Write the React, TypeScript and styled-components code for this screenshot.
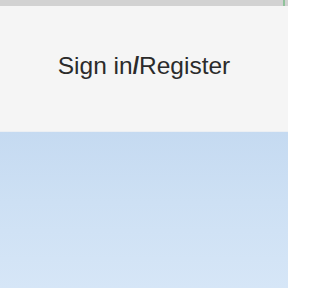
import React from "react";
import styled, { createGlobalStyle } from "styled-components";

const Global = createGlobalStyle`
  html, body { margin: 0; padding: 0; height: 100%; }
  body { font-family: "Liberation Sans", Arial, sans-serif; }
  #root { height: 100%; }
`;

const Page = styled.div`
  display: flex;
  flex-direction: column;
  width: 288px;
  height: 288px;
  overflow: hidden;
`;

const TopBar = styled.div`
  height: 6px;
  background: #d2d2d2;
  display: flex;
  justify-content: flex-end;
`;

const Accent = styled.div`
  width: 2px;
  margin-right: 3px;
  background: #8fc29a;
`;

const Panel = styled.div`
  height: 126px;
  background: #f5f5f5;
  display: flex;
  align-items: center;
  justify-content: center;
  padding-bottom: 6px;
  border-bottom: 1px solid #eceff3;
  box-sizing: border-box;
`;

const Title = styled.h1`
  margin: 0;
  font-family: "Liberation Sans", Arial, sans-serif;
  font-weight: 400;
  font-size: 24.5px;
  color: #2b2b2b;
  letter-spacing: 0;
`;

const Slash = styled.span`
  font-weight: 700;
  font-size: 23px;
`;

const Sky = styled.div`
  flex: 1;
  background: linear-gradient(180deg, #c5daf1 0%, #cde0f4 45%, #d6e6f7 100%);
`;

export default function App() {
  return (
    <>
      <Global />
      <Page>
        <TopBar>
          <Accent />
        </TopBar>
        <Panel>
          <Title>
            Sign in<Slash>/</Slash>Register
          </Title>
        </Panel>
        <Sky />
      </Page>
    </>
  );
}
